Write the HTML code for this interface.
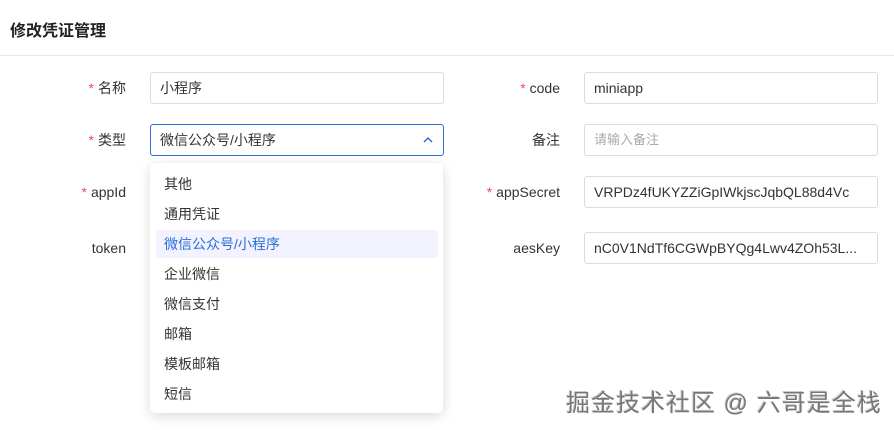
<!DOCTYPE html>
<html><head><meta charset="utf-8"><style>
body{margin:0;width:894px;height:430px;background:#fff;font-family:"Liberation Sans","Noto Sans CJK SC",sans-serif;font-size:14px;color:#333;position:relative;overflow:hidden}
.t{position:absolute;left:10px;top:17px;font-size:16px;font-weight:bold;color:#222}
.hr{position:absolute;left:0;right:0;top:55px;height:1px;background:#e8e8e8}
.lb{position:absolute;width:120px;text-align:right;line-height:20px;color:#333}
.lb i{color:#e34d59;font-style:normal;margin-right:4px}
.in{position:absolute;width:294px;height:32px;border:1px solid #dcdcdc;border-radius:3px;line-height:30px;padding-left:9px;box-sizing:border-box;color:#333;white-space:nowrap;overflow:hidden}
.ph{color:#aaa}
.sel{border-color:#2b6cd8}
.dd{position:absolute;left:150px;top:163px;width:293px;height:250px;background:#fff;border-radius:5px;box-shadow:0 3px 12px rgba(0,0,0,.15)}
.it{position:absolute;left:6px;width:282px;height:28px;line-height:28px;padding-left:8px;box-sizing:border-box;border-radius:3px}
.hl{background:#f2f3ff;color:#2b6cd8}
.wm{position:absolute;left:566px;top:383px;font-size:24px;color:#777;text-shadow:1px 1px 0 #fff,-1px -1px 0 #ccc;letter-spacing:1px;font-weight:normal}
</style></head><body>
<div class="t">修改凭证管理</div>
<div class="hr"></div>
<div class="lb" style="left:6px;top:78px"><i>*</i>名称</div>
<div class="in" style="left:150px;top:72px">小程序</div>
<div class="lb" style="left:6px;top:130px"><i>*</i>类型</div>
<div class="in sel" style="left:150px;top:124px">微信公众号/小程序
<svg style="position:absolute;right:10px;top:11px" width="10" height="8" viewBox="0 0 10 8"><path d="M1 6L5 2L9 6" stroke="#2b6cd8" stroke-width="1.5" fill="none"/></svg></div>
<div class="lb" style="left:6px;top:182px"><i>*</i>appId</div>
<div class="lb" style="left:6px;top:238px">token</div>
<div class="lb" style="left:440px;top:78px"><i>*</i>code</div>
<div class="in" style="left:584px;top:72px">miniapp</div>
<div class="lb" style="left:440px;top:130px">备注</div>
<div class="in ph" style="left:584px;top:124px;font-size:13px">请输入备注</div>
<div class="lb" style="left:440px;top:182px"><i>*</i>appSecret</div>
<div class="in" style="left:584px;top:176px">VRPDz4fUKYZZiGpIWkjscJqbQL88d4Vc</div>
<div class="lb" style="left:440px;top:238px">aesKey</div>
<div class="in" style="left:584px;top:232px">nC0V1NdTf6CGWpBYQg4Lwv4ZOh53L...</div>
<div class="dd">
<div class="it" style="top:7px">其他</div>
<div class="it" style="top:37px">通用凭证</div>
<div class="it hl" style="top:67px">微信公众号/小程序</div>
<div class="it" style="top:97px">企业微信</div>
<div class="it" style="top:127px">微信支付</div>
<div class="it" style="top:157px">邮箱</div>
<div class="it" style="top:187px">模板邮箱</div>
<div class="it" style="top:217px">短信</div>
</div>
<div class="wm">掘金技术社区 @ 六哥是全栈</div>
</body></html>
